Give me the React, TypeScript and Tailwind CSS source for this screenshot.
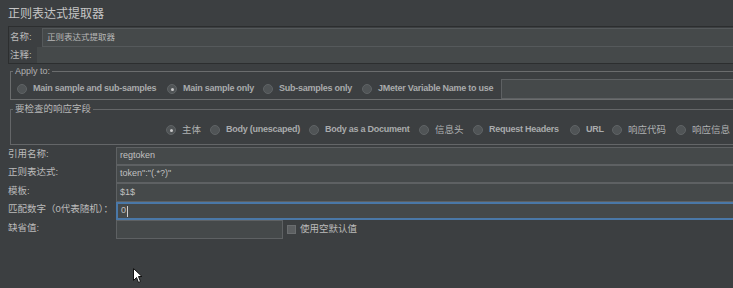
import React from "react";

const font = "font-['Liberation_Sans','Noto_Sans_CJK_SC',sans-serif]";

const Radio = ({ checked }: { checked?: boolean }) => (
  <span className="w-[10px] h-[10px] rounded-full bg-[#505456] border border-[#5f6365] flex items-center justify-center shrink-0">
    {checked && <span className="w-[3px] h-[3px] rounded-full bg-[#c8c8c8]" />}
  </span>
);

interface OptionProps {
  label: string;
  w: string;
  checked?: boolean;
  cjk?: boolean;
}

const Option: React.FC<OptionProps> = ({ label, w, checked, cjk }) => (
  <div className={`flex items-center gap-[6px] shrink-0 ${w}`}>
    <Radio checked={checked} />
    <span
      className={
        cjk
          ? "text-[9.5px] text-[#b0b2b3] whitespace-nowrap"
          : "text-[9px] font-bold tracking-[-0.25px] text-[#a9abac] whitespace-nowrap"
      }
    >
      {label}
    </span>
  </div>
);

const Field = ({
  label,
  value,
  h,
  focused,
  children,
}: {
  label: string;
  value?: string;
  h: string;
  focused?: boolean;
  children?: React.ReactNode;
}) => (
  <div className={`flex items-stretch ${h}`}>
    <div className="w-[108px] shrink-0 flex items-center pb-[3px] text-[9.5px] text-[#bbbbbb] whitespace-nowrap">
      {label}
    </div>
    {children ?? (
      <div
        className={`flex-1 -mr-[10px] flex items-center px-[3px] bg-[#45494a] text-[9px] text-[#c0c0c0] ${
          focused
            ? "border-2 border-[#4a78a8]"
            : "border border-[#5e6163]"
        }`}
      >
        {value}
        {focused && <span className="ml-[1px] w-[1px] h-[11px] bg-[#d0d0d0]" />}
      </div>
    )}
  </div>
);

export default function App() {
  return (
    <div
      className={`relative w-[733px] h-[288px] overflow-hidden bg-[#3c3f41] text-[#bbbbbb] ${font}`}
    >
      <div className="h-[26px] pl-2 pt-[6px] text-[12px] leading-[16px] text-[#c6c6c6]">
        正则表达式提取器
      </div>

      <div className="ml-2 -mr-[10px] border border-[#2c2e2f]">
        <div className="flex items-center h-[20px]">
          <span className="w-[33px] pl-[1px] text-[9.5px] shrink-0">名称:</span>
          <div className="flex-1 h-[19px] flex items-center px-[4px] bg-[#45494a] border border-[#55595b] text-[8.5px] text-[#b8b8b8]">
            正则表达式提取器
          </div>
        </div>
        <div className="flex items-center h-[16px]">
          <span className="w-[28px] pl-[1px] text-[9.5px] shrink-0">注释:</span>
          <div className="flex-1 h-[16px] bg-[#45494a] border border-[#45494a]" />
        </div>
      </div>

      <fieldset className="ml-[10px] -mr-[10px] mt-[1px] p-0 border border-[#6b6d6e]">
        <legend className="ml-[2px] px-[2px] text-[9px] leading-[12px] text-[#b0b0b0]">
          Apply to:
        </legend>
        <div className="flex items-center h-[20px] mt-[2px] pl-[6px]">
          <Option w="w-[150px]" label="Main sample and sub-samples" />
          <Option w="w-[96px]" label="Main sample only" checked />
          <Option w="w-[99px]" label="Sub-samples only" />
          <Option w="w-[139px]" label="JMeter Variable Name to use" />
          <div className="flex-1 h-[20px] bg-[#45494a] border border-[#5e6163]" />
        </div>
      </fieldset>

      <fieldset className="ml-[10px] -mr-[10px] mt-[3px] p-0 border border-[#646668]">
        <legend className="ml-[2px] px-[2px] text-[9.5px] leading-[12px] text-[#b8b8b8]">
          要检查的响应字段
        </legend>
        <div className="flex items-center h-[18px] mt-[6px] mb-[5px] pl-[155px]">
          <Option w="w-[44px]" label="主体" checked cjk />
          <Option w="w-[99px]" label="Body (unescaped)" />
          <Option w="w-[110px]" label="Body as a Document" />
          <Option w="w-[54px]" label="信息头" cjk />
          <Option w="w-[97px]" label="Request Headers" />
          <Option w="w-[42px]" label="URL" />
          <Option w="w-[64px]" label="响应代码" cjk />
          <Option w="w-[60px]" label="响应信息" cjk />
        </div>
      </fieldset>

      <div className="mt-[2px] pl-2">
        <Field h="h-[18px]" label="引用名称:" value="regtoken" />
        <Field h="h-[18px]" label="正则表达式:" value={'token":"(.*?)"'} />
        <Field h="h-[19px]" label="模板:" value="$1$" />
        <Field h="h-[18px]" label="匹配数字（0代表随机）：" value="0" focused />
        <Field h="h-[19px]" label="缺省值:">
          <div className="flex items-center">
            <div className="w-[167px] h-[19px] bg-[#45494a] border border-[#5e6163]" />
            <span className="ml-[4px] w-[9px] h-[9px] bg-[#5c5f61] border border-[#6a6d6f]" />
            <span className="ml-[4px] text-[9.5px] text-[#bbbbbb]">使用空默认值</span>
          </div>
        </Field>
      </div>

      <svg
        className="absolute left-[133px] top-[268px]"
        width="10"
        height="16"
        viewBox="0 0 10 16"
      >
        <path
          d="M0.5 0.5 L0.5 12.5 L3.5 9.5 L5.5 14.5 L7.5 13.5 L5.5 8.5 L9 8.5 Z"
          fill="#ffffff"
          stroke="#111111"
          strokeWidth="1"
          strokeLinejoin="round"
        />
      </svg>
    </div>
  );
}
